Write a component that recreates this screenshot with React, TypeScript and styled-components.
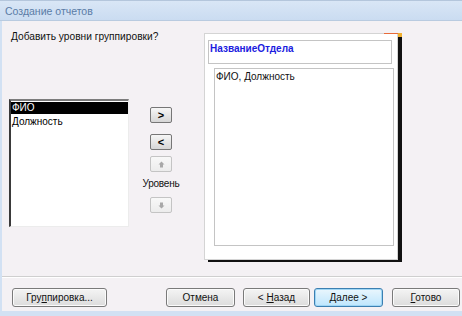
import styled, { createGlobalStyle } from "styled-components";

const Global = createGlobalStyle`
  html, body {
    margin: 0;
    padding: 0;
    background: #f4f1f4;
  }
  body {
    font-family: "Liberation Sans", Arial, sans-serif;
    color: #000;
  }
`

const Window = styled.div`
  width: 462px;
  height: 316px;
  display: flex;
  flex-direction: column;
  background: #f4f1f4;
  overflow: hidden;
`

const TitleBar = styled.div`
  height: 21px;
  box-sizing: border-box;
  display: flex;
  align-items: center;
  padding-left: 5px;
  background: linear-gradient(#d9e6f6, #cadcf1);
  border-top: 1px solid #b4c6dc;
  border-bottom: 1px solid #b9cbe0;
  font-size: 10.5px;
  color: #5a7ca6;
`

const Body = styled.div`
  flex: 1;
  display: flex;
  flex-direction: column;
  border-left: 2px solid #d2e1f3;
  border-bottom: 5px solid #d2e1f3;
`

const Main = styled.div`
  height: 246px;
  padding-top: 9px;
  display: flex;
  align-items: flex-start;
`

const LeftColumn = styled.div`
  width: 120px;
  margin-left: 7px;
  display: flex;
  flex-direction: column;
`

const Heading = styled.div`
  font-size: 10.2px;
  line-height: 13px;
  padding-left: 2px;
  white-space: nowrap;
  color: #111;
`

const ListBox = styled.div`
  margin-top: 56px;
  height: 124px;
  background: #fff;
  border-top: 2px solid #7c7c7c;
  border-left: 2px solid #3a3a3a;
  border-right: 1px solid #ececec;
  border-bottom: 1px solid #ececec;
  padding-top: 1px;
`

const ListItem = styled.div<{ selected?: boolean }>`
  height: 12px;
  line-height: 12px;
  font-size: 10px;
  padding-left: 1px;
  background: ${(p) => (p.selected ? "#000" : "transparent")};
  color: ${(p) => (p.selected ? "#fff" : "#000")};
  margin-bottom: 2px;
`

const MiddleColumn = styled.div`
  width: 62px;
  margin-left: 1px;
  padding-top: 77px;
  display: flex;
  flex-direction: column;
  align-items: center;
`

const ArrowButton = styled.button<{ disabled?: boolean; gap?: number }>`
  width: 22px;
  height: 16px;
  margin: 0 0 ${(p) => p.gap ?? 0}px 0;
  padding: 0;
  display: flex;
  align-items: center;
  justify-content: center;
  border: 1px solid ${(p) => (p.disabled ? "#c4c4c4" : "#767676")};
  border-radius: 2px;
  background: ${(p) =>
    p.disabled ? "linear-gradient(#f8f8f8, #ececec)" : "linear-gradient(#f6f6f6, #d6d6d6)"};
  font-family: "Liberation Sans", Arial, sans-serif;
  font-weight: bold;
  font-size: 11px;
  color: #000;
`

const LevelLabel = styled.div`
  font-size: 10px;
  line-height: 12px;
  margin: 0 0 7px 0;
  color: #111;
  letter-spacing: -0.2px;
`

const Preview = styled.div`
  position: relative;
  margin-left: 12px;
  margin-top: 3px;
  width: 194px;
  height: 227px;
  box-sizing: border-box;
  background: #fff;
  border: 1px solid #d4d4d4;
  box-shadow: 4px 2px 0 #111;
  display: flex;
  flex-direction: column;

  &::before {
    content: "";
    position: absolute;
    top: -1px;
    right: -5px;
    width: 18px;
    height: 1px;
    background: #e86a3a;
  }
  &::after {
    content: "";
    position: absolute;
    top: -1px;
    right: -5px;
    width: 4px;
    height: 4px;
    background: #f0b030;
  }
`

const GroupHeader = styled.div`
  margin: 6px 5px 0 3px;
  height: 24px;
  box-sizing: border-box;
  border: 1px solid #c4c4c4;
  padding: 2px 0 0 1px;
  font-size: 10px;
  font-weight: bold;
  color: #1c1ce0;
`

const DetailBox = styled.div`
  flex: 1;
  margin: 4px 3px 13px 9px;
  border: 1px solid #c4c4c4;
  padding: 2px 0 0 1px;
  font-size: 10px;
  color: #111;
`

const Footer = styled.div`
  flex: 1;
  border-top: 1px solid #cfcfcf;
  box-shadow: inset 0 1px 0 #fff;
  display: flex;
  align-items: flex-start;
  padding: 11px 2px 0 10px;
`

const DialogButton = styled.button<{ w: number; gap?: number; focused?: boolean }>`
  width: ${(p) => p.w}px;
  height: 19px;
  margin: 0 ${(p) => p.gap ?? 0}px 0 0;
  padding: 0;
  border: 1px solid ${(p) => (p.focused ? "#3c7fb1" : "#7a7a7a")};
  border-radius: 3px;
  background: ${(p) =>
    p.focused ? "linear-gradient(#eaf6fd, #bee6fd)" : "linear-gradient(#f4f4f4, #dcdcdc)"};
  box-shadow: inset 0 0 0 1px ${(p) => (p.focused ? "#9fd6f5" : "#fbfbfb")};
  font-family: "Liberation Sans", Arial, sans-serif;
  font-size: 10px;
  color: #111;
`

const Spacer = styled.div`
  flex: 1;
`

const Key = styled.span`
  text-decoration: underline;
`

function StepArrow({ down }: { down?: boolean }) {
  return (
    <svg width="7" height="7" viewBox="0 0 7 7" style={{ transform: down ? "rotate(180deg)" : undefined }}>
      <path d="M3.5 0.5 L6.5 3.5 L5 3.5 L5 6.5 L2 6.5 L2 3.5 L0.5 3.5 Z" fill="#a8a8a8" />
    </svg>
  )
}

function App() {
  return (
    <Window>
      <Global />
      <TitleBar>Создание отчетов</TitleBar>
      <Body>
        <Main>
          <LeftColumn>
            <Heading>Добавить уровни группировки?</Heading>
            <ListBox>
              <ListItem selected>ФИО</ListItem>
              <ListItem>Должность</ListItem>
            </ListBox>
          </LeftColumn>
          <MiddleColumn>
            <ArrowButton gap={11}>&gt;</ArrowButton>
            <ArrowButton gap={6}>&lt;</ArrowButton>
            <ArrowButton disabled gap={6}>
              <StepArrow />
            </ArrowButton>
            <LevelLabel>Уровень</LevelLabel>
            <ArrowButton disabled>
              <StepArrow down />
            </ArrowButton>
          </MiddleColumn>
          <Preview>
            <GroupHeader>НазваниеОтдела</GroupHeader>
            <DetailBox>ФИО, Должность</DetailBox>
          </Preview>
        </Main>
        <Footer>
          <DialogButton w={95}>
            Гру<Key>п</Key>пировка...
          </DialogButton>
          <Spacer />
          <DialogButton w={69} gap={8}>Отмена</DialogButton>
          <DialogButton w={67} gap={4}>
            &lt; <Key>Н</Key>азад
          </DialogButton>
          <DialogButton w={69} gap={9} focused>
            <Key>Д</Key>алее &gt;
          </DialogButton>
          <DialogButton w={68}>
            <Key>Г</Key>отово
          </DialogButton>
        </Footer>
      </Body>
    </Window>
  )
}

export default App
